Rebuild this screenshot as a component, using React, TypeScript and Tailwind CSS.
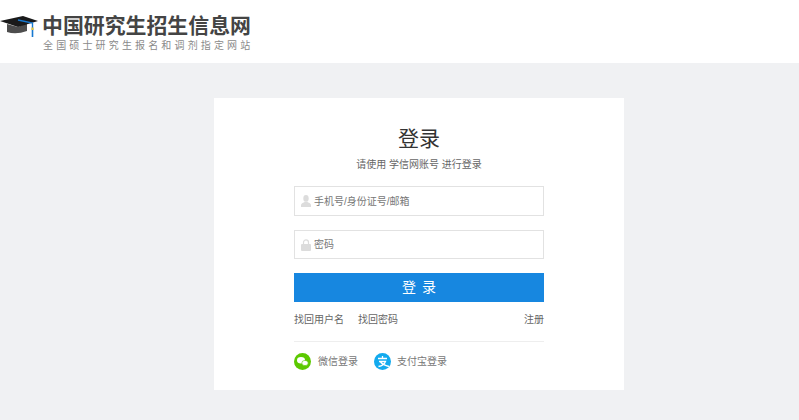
export default function App() {
  const font = { fontFamily: '"Liberation Sans", "Noto Sans CJK SC", sans-serif' };
  return (
    <div style={font} className="h-[420px] w-[799px] overflow-hidden bg-[#f0f1f3]">
      <header className="flex h-[63px] items-start bg-white">
        <svg className="mt-[15px] h-[23px] w-[39px] shrink-0" viewBox="0 0 39 23">
          <path d="M7 9 L7 17 Q16 20 27 16 L27 8 L18 12 Z" fill="#4d4d4d" />
          <path d="M0 6 L23 1 L38 6 L18 12 Z" fill="#1a1a1a" />
          <path d="M18 5 L32.5 8 L32.5 14" fill="none" stroke="#1678d0" strokeWidth="1.4" />
          <rect x="31.7" y="14" width="1.6" height="8" fill="#1678d0" />
          <rect x="31.4" y="12.5" width="2.2" height="2.5" fill="#e2c33a" />
        </svg>
        <div className="ml-[3px] pt-[13px]">
          <div className="h-[26px] whitespace-nowrap text-[20.9px] leading-[26px] font-bold text-[#444444]">中国研究生招生信息网</div>
          <div className="mt-[1px] h-[12px] whitespace-nowrap pl-[1px] text-[10px] leading-[12px] tracking-[3.15px] text-[#8a8a8a]">全国硕士研究生报名和调剂指定网站</div>
        </div>
      </header>
      <main className="ml-[214px] mt-[35px] flex h-[292px] w-[410px] flex-col bg-white px-[80px]">
        <h1 className="mt-[27px] h-[28px] text-center text-[21px] leading-[28px] font-normal text-[#333333]">登录</h1>
        <p className="mt-[4px] h-[16px] text-center text-[10px] leading-[16px] text-[#666666]">请使用 学信网账号 进行登录</p>
        <div className="mt-[13px] flex h-[30px] items-center border border-[#e2e2e2] bg-white pl-[6px]">
          <svg className="h-[12px] w-[10px] shrink-0" viewBox="0 0 10 12" fill="#dcdcdc">
            <ellipse cx="5" cy="3.4" rx="2.7" ry="3.4" />
            <path d="M0 12 L0 9.6 Q0.5 8 3.6 7 L6.4 7 Q9.5 8 10 9.6 L10 12 Z" />
          </svg>
          <span className="ml-[3px] text-[10px] text-[#777777]">手机号/身份证号/邮箱</span>
        </div>
        <div className="mt-[14px] flex h-[29px] items-center border border-[#e2e2e2] bg-white pl-[6px]">
          <svg className="h-[12px] w-[10px] shrink-0" viewBox="0 0 10 12">
            <path d="M2.5 5.5 V3.4 a2.5 2.5 0 0 1 5 0 V5.5" fill="none" stroke="#dcdcdc" strokeWidth="1.2" />
            <rect x="0" y="5" width="10" height="7" rx="1" fill="#dcdcdc" />
          </svg>
          <span className="ml-[3px] text-[10px] text-[#777777]">密码</span>
        </div>
        <button className="mt-[14px] h-[29px] bg-[#1787e0] pl-[6px] text-[14px] leading-[29px] tracking-[6px] text-white">登录</button>
        <div className="mt-[10px] flex h-[16px] items-center text-[10px] leading-[16px] text-[#666666]">
          <span>找回用户名</span>
          <span className="ml-[14px]">找回密码</span>
          <span className="ml-auto">注册</span>
        </div>
        <div className="mt-[13px] h-px bg-[#eeeeee]" />
        <div className="mt-[11px] flex h-[17px] items-center text-[10px] text-[#777777]">
          <svg className="h-[17px] w-[17px] shrink-0" viewBox="0 0 17 17">
            <circle cx="8.5" cy="8.5" r="8.5" fill="#5cc900" />
            <ellipse cx="7" cy="7.2" rx="4" ry="3.2" fill="#fff" />
            <ellipse cx="11" cy="10" rx="3.2" ry="2.6" fill="#fff" stroke="#5cc900" strokeWidth="0.6" />
          </svg>
          <span className="ml-[7px]">微信登录</span>
          <svg className="ml-[16px] h-[17px] w-[17px] shrink-0" viewBox="0 0 17 17">
            <circle cx="8.5" cy="8.5" r="8.5" fill="#12aaee" />
            <path d="M4 5.5 H13 M8.5 3 V5.5 M5 8.5 H11.5 Q10 12.5 4.5 13.5 M6.5 9 Q9 12 15 13.5" fill="none" stroke="#fff" strokeWidth="1.3" />
          </svg>
          <span className="ml-[6px]">支付宝登录</span>
        </div>
      </main>
    </div>
  );
}
